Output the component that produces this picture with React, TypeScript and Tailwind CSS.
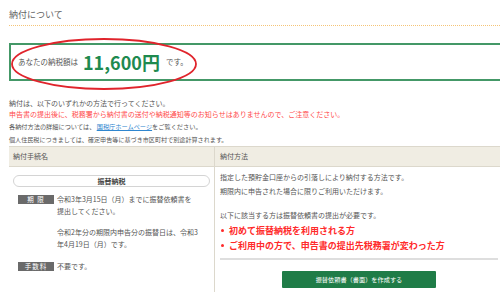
import React from "react"

const jp = "font-['Noto_Sans_CJK_JP',sans-serif]"

function Label({ children }: { children: React.ReactNode }) {
  return (
    <span className="mt-[2px] flex h-[9px] w-[36px] shrink-0 items-center justify-center bg-[#6a6a6a] text-[6.5px] leading-none tracking-[0.15em] text-white">
      {children}
    </span>
  )
}

export default function App() {
  return (
    <div className={`h-[292px] w-[500px] overflow-hidden bg-white text-[#555] ${jp}`}>
      <div className="w-[520px] pl-[9px]">
        <div className="border-b border-dotted border-[#f5c477] pt-[9px] pb-[4px] text-[9px] leading-[12px] text-[#666]">
          納付について
        </div>

        {/* amount box with red marker ellipse */}
        <div className="relative mt-[17px]">
          <div className="flex h-[38px] items-center border-2 border-[#449867] pl-[7px]">
            <span className="text-[7.5px]">あなたの納税額は</span>
            <span className="ml-[5px] text-[18px] font-bold leading-none text-[#1e8a4f]">11,600円</span>
            <span className="ml-[6px] text-[7.5px]">です。</span>
          </div>
          <svg className="pointer-events-none absolute left-[1px] top-[-6px]" width="188" height="54" viewBox="0 0 188 54">
            <ellipse cx="94" cy="27" rx="92" ry="25" fill="none" stroke="#e0242c" strokeWidth="1.8" />
          </svg>
        </div>

        <div className="mt-[16.5px] text-[7px] leading-[11px]">
          <p>納付は、以下のいずれかの方法で行ってください。</p>
          <p className="text-[#ff4a4a]">申告書の提出後に、税務署から納付書の送付や納税通知等のお知らせはありませんので、ご注意ください。</p>
          <p className="mt-[1px] text-[6.2px]">
            各納付方法の詳細については、 <span className="text-[#2f86cf] underline">国税庁ホームページ</span>をご覧ください。
          </p>
          <p className="mt-[2px] text-[6.1px]">個人住民税につきましては、確定申告等に基づき市区町村で別途計算されます。</p>
        </div>

        {/* table */}
        <div className="mt-[1.5px]">
          <div className="grid h-[21px] grid-cols-[205px_1fr] border-y border-[#dcd8cc] bg-[#f0ede3] text-[7px]">
            <div className="flex items-center pl-[4px]">納付手続名</div>
            <div className="flex items-center border-l border-[#dcd8cc] pl-[5px]">納付方法</div>
          </div>
          <div className="grid h-[140px] grid-cols-[205px_1fr] text-[7px]">
            <div className="px-[4px] pt-[8px]">
              <div className="flex h-[12px] w-[197px] items-center justify-center rounded-full border border-[#d4d4d4] font-bold text-[#444]">
                振替納税
              </div>
              <div className="mt-[5.5px] flex gap-[3px] pl-[5px] leading-[12px]">
                <Label>期 限</Label>
                <div>
                  <p>令和3年3月15日（月）までに振替依頼書を<br />提出してください。</p>
                  <p className="mt-[9px]">令和2年分の期限内申告分の振替日は、令和3<br />年4月19日（月）です。</p>
                </div>
              </div>
              <div className="mt-[10px] flex gap-[3px] pl-[5px] leading-[12px]">
                <Label>手数料</Label>
                <p>不要です。</p>
              </div>
            </div>

            <div className="border-l border-[#dcd8cc] pl-[5px] pr-[23px] pt-[3px]">
              <p className="leading-[14px]">指定した預貯金口座からの引落しにより納付する方法です。<br />期限内に申告された場合に限りご利用いただけます。</p>
              <p className="mt-[10px] leading-[14px]">以下に該当する方は振替依頼書の提出が必要です。</p>
              <ul className="mt-[1px] text-[9px] font-bold leading-[15px] text-[#ff2a2a]">
                <li className="flex items-center">
                  <span className="ml-[1px] mr-[5px] h-[3px] w-[3px] rounded-full bg-[#ff2a2a]" />
                  初めて振替納税を利用される方
                </li>
                <li className="flex items-center">
                  <span className="ml-[1px] mr-[5px] h-[3px] w-[3px] rounded-full bg-[#ff2a2a]" />
                  ご利用中の方で、申告書の提出先税務署が変わった方
                </li>
              </ul>
              <div className="mt-[5px] h-[2px] w-[278px] bg-[#dedede]" />
              <div className="w-[278px]">
                <button className="mx-auto mt-[11px] flex h-[17px] w-[154px] items-center justify-center rounded-[1px] bg-[#1f7c47] text-[6.2px] text-white">
                  振替依頼書（書面）を作成する
                </button>
              </div>
            </div>
          </div>
        </div>
      </div>
    </div>
  )
}
